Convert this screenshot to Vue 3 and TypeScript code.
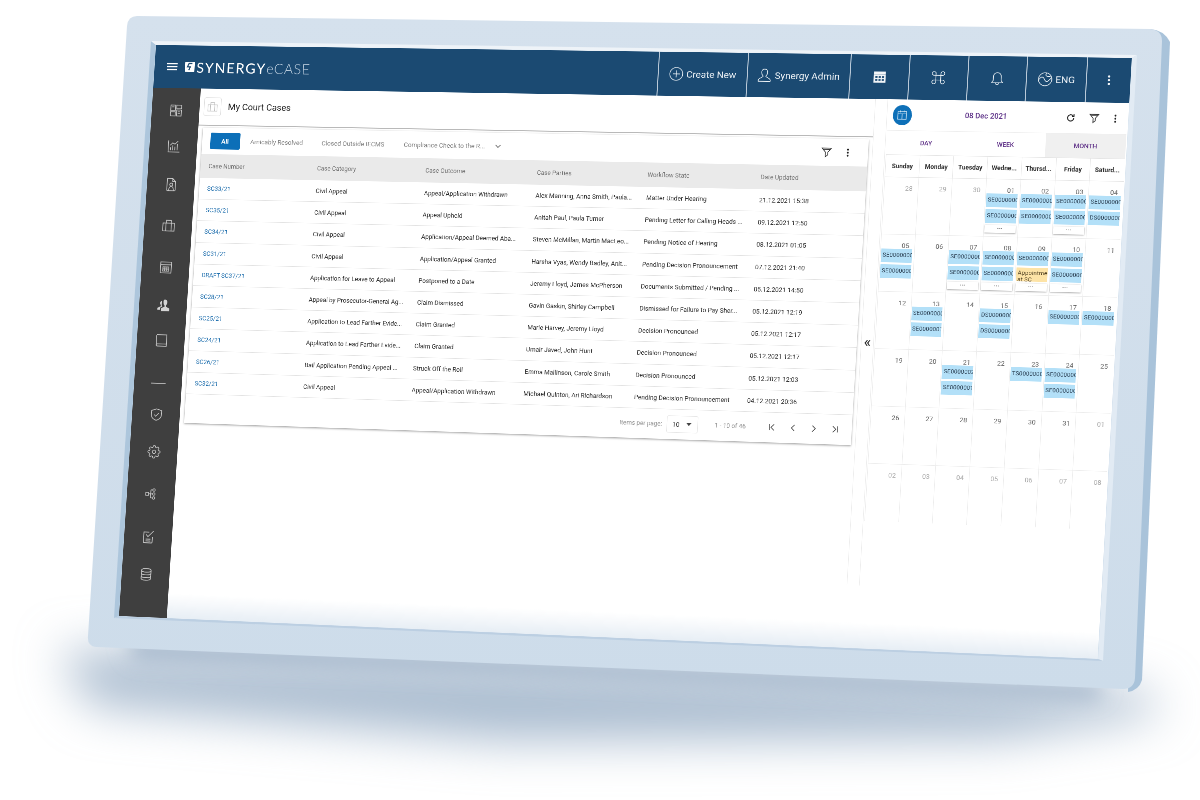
<script setup lang="ts">
type Pt = [number, number]
const W = 1952
const H = 1170
function homography(p0: Pt, p1: Pt, p2: Pt, p3: Pt): string {
  const dx1 = p1[0] - p2[0], dx2 = p3[0] - p2[0], sx = p0[0] - p1[0] + p2[0] - p3[0]
  const dy1 = p1[1] - p2[1], dy2 = p3[1] - p2[1], sy = p0[1] - p1[1] + p2[1] - p3[1]
  const den = dx1 * dy2 - dx2 * dy1
  const g = (sx * dy2 - dx2 * sy) / den
  const h = (dx1 * sy - sx * dy1) / den
  const a = p1[0] - p0[0] + g * p1[0], b = p3[0] - p0[0] + h * p3[0]
  const d = p1[1] - p0[1] + g * p1[1], e = p3[1] - p0[1] + h * p3[1]
  return `matrix3d(${[a / W, d / W, 0, g / W, b / H, e / H, 0, h / H, 0, 0, 1, 0, p0[0], p0[1], 0, 1].join(',')})`
}
const screenTransform = homography([156, 45], [1132, 58], [1098, 659], [119, 616])

const gear = 'M19.4 15a1.65 1.65 0 0 0 .33 1.82l.06.06a2 2 0 0 1 0 2.83 2 2 0 0 1-2.83 0l-.06-.06a1.65 1.65 0 0 0-1.82-.33 1.65 1.65 0 0 0-1 1.51V21a2 2 0 0 1-2 2 2 2 0 0 1-2-2v-.09A1.65 1.65 0 0 0 9 19.4a1.65 1.65 0 0 0-1.82.33l-.06.06a2 2 0 0 1-2.83 0 2 2 0 0 1 0-2.83l.06-.06a1.65 1.65 0 0 0 .33-1.82 1.65 1.65 0 0 0-1.51-1H3a2 2 0 0 1-2-2 2 2 0 0 1 2-2h.09A1.65 1.65 0 0 0 4.6 9a1.65 1.65 0 0 0-.33-1.82l-.06-.06a2 2 0 0 1 0-2.83 2 2 0 0 1 2.83 0l.06.06a1.65 1.65 0 0 0 1.82.33H9a1.65 1.65 0 0 0 1-1.51V3a2 2 0 0 1 2-2 2 2 0 0 1 2 2v.09a1.65 1.65 0 0 0 1 1.51 1.65 1.65 0 0 0 1.82-.33l.06-.06a2 2 0 0 1 2.83 0 2 2 0 0 1 0 2.83l-.06.06a1.65 1.65 0 0 0-.33 1.82V9a1.65 1.65 0 0 0 1.51 1H21a2 2 0 0 1 2 2 2 2 0 0 1-2 2h-.09a1.65 1.65 0 0 0-1.51 1z M12 9a3 3 0 1 0 .01 0z'
const sideIcons: { d: string; y: number; fill?: boolean; small?: boolean }[] = [
  { y: 134, d: 'M3 3h8v9H3z M13 3h8v6h-8z M13 11h8v10h-8z M3 14h8v7H3z M5 6h4 M15 14h4 M15 17h4' },
  { y: 208, d: 'M3 2v19h19 M7 18v-5 M10.5 18v-8 M14 18v-6 M18 18V8 M6 10l4-4 4 2 5-5' },
  { y: 286, d: 'M5 2h9l5 5v14a1 1 0 0 1-1 1H6a1 1 0 0 1-1-1z M14 2v5h5 M12 9.5a2.5 2.5 0 1 0 .01 0z M8 22c0-4 1.500-7 4-7s4 3 4 7' },
  { y: 370, d: 'M2.500 8h19v13h-19z M8 8V3.500h8V8 M7.500 8v13 M16.500 8v13' },
  { y: 456, d: 'M3 3h18v18H3z M3 7.500h18 M7 11h10v7H7z M10.300 11v7 M13.700 11v7 M7 14.500h10' },
  { y: 534, fill: true, d: 'M14 2c3 0 4.500 2.500 4 5.500-.3 2-1 3.500-2 4.500v1.500l6 3V21H8v-4.500l6-3V12c-1-1-2-2.500-2.200-4.500C11.500 4.500 11.500 2 14 2z M9.500 4.500C7 4.500 6 6.500 6.500 9c.2 1.200.6 2.200 1.300 3v1L2 16v3h4.500v-3.500l3.500-2c-1.300-2-1.500-5-.5-9z' },
  { y: 605, d: 'M5 3h16v15H6a2 2 0 0 0-2 2V5a2 2 0 0 1 1-2z M4 20a2 2 0 0 0 2 1.500h15V18' },
  { y: 693, d: 'M0 12h24' },
  { y: 757, small: true, d: 'M12 2l9 3v7c0 5-4 8.500-9 10-5-1.500-9-5-9-10V5z M8 12l3 3 5-5.500' },
  { y: 833, small: true, d: gear },
  { y: 919, small: true, d: 'M2 9.500h5v5H2z M7 12h4 M11 5v14 M11 5h3 M11 12h3 M11 19h3 M16.500 2.800a2.200 2.200 0 1 0 .01 0z M16.500 9.800a2.200 2.200 0 1 0 .01 0z M16.500 16.800a2.200 2.200 0 1 0 .01 0z' },
  { y: 1007, d: 'M13 4H4v16a1.500 1.500 0 0 0 1.500 1.500H17a1.500 1.500 0 0 0 1.500-1.500v-8 M8 8l3 3.500L20 2 M7.500 15.500h8 M7.500 18.500h8' },
  { y: 1083, d: 'M4 5.500C4 1.500 20 1.500 20 5.500v13c0 4-16 4-16 0z M4 5.500c0 4 16 4 16 0 M4 10c0 4 16 4 16 0 M4 14.500c0 4 16 4 16 0' }
]
const iconStep = sideIcons.map((ic, i) => (i === 0 ? ic.y - 88 - 18 : ic.y - sideIcons[i - 1].y - 36))

const columns = ['Case Number', 'Case Category', 'Case Outcome', 'Case Parties', 'Workflow State', 'Date Updated']
const rows = [
  ['SC33/21', 'Civil Appeal', 'Appeal/Application Withdrawn', 'Alex Manning, Anna Smith, Paula...', 'Matter Under Hearing', '21.12.2021 15:38'],
  ['SC35/21', 'Civil Appeal', 'Appeal Upheld', 'Anitah Paul, Paula Turner', 'Pending Letter for Calling Heads ...', '09.12.2021 12:50'],
  ['SC34/21', 'Civil Appeal', 'Application/Appeal Deemed Aba...', 'Steven McMillan, Martin MacLeo...', 'Pending Notice of Hearing', '08.12.2021 01:05'],
  ['SC31/21', 'Civil Appeal', 'Application/Appeal Granted', 'Harsha Vyas, Wendy Badley, Anit...', 'Pending Decision Pronouncement', '07.12.2021 21:40'],
  ['DRAFT-SC37/21', 'Application for Leave to Appeal', 'Postponed to a Date', 'Jeremy Lloyd, James McPherson', 'Documents Submitted / Pending ...', '05.12.2021 14:50'],
  ['SC28/21', 'Appeal by Prosecutor-General Ag...', 'Claim Dismissed', 'Gavin Gaskin, Shirley Campbell', 'Dismissed for Failure to Pay Sher...', '05.12.2021 12:19'],
  ['SC25/21', 'Application to Lead Farther Evide...', 'Claim Granted', 'Marie Harvey, Jeremy Lloyd', 'Decision Pronounced', '05.12.2021 12:17'],
  ['SC24/21', 'Application to Lead Farther Evide...', 'Claim Granted', 'Umair Javed, John Hunt', 'Decision Pronounced', '05.12.2021 12:17'],
  ['SC26/21', 'Bail Application Pending Appeal ...', 'Struck Off the Roll', 'Emma Mallinson, Carole Smith', 'Decision Pronounced', '05.12.2021 12:03'],
  ['SC32/21', 'Civil Appeal', 'Appeal/Application Withdrawn', 'Michael Quinton, Ari Richardson', 'Pending Decision Pronouncement', '04.12.2021 20:36']
]

const weekdays = ['Sunday', 'Monday', 'Tuesday', 'Wedne...', 'Thursd...', 'Friday', 'Saturd...']
interface Cell { n: string; muted?: boolean; ev?: string[]; more?: boolean }
const S = 'SE0000000'
const D = 'DS0000000'
const cells: Cell[] = [
  { n: '28', muted: true }, { n: '29', muted: true }, { n: '30', muted: true },
  { n: '01', ev: [S, S], more: true }, { n: '02', ev: [S, S] }, { n: '03', ev: [S, S], more: true }, { n: '04', ev: [S, D] },
  { n: '05', ev: [S, S] }, { n: '06' }, { n: '07', ev: [S, S], more: true }, { n: '08', ev: [S, S], more: true },
  { n: '09', ev: [S, 'Appointment at SC'], more: true }, { n: '10', ev: [S, S], more: true }, { n: '11' },
  { n: '12' }, { n: '13', ev: [S, 'SE0000001'] }, { n: '14' }, { n: '15', ev: [D, D] }, { n: '16' }, { n: '17', ev: [S] }, { n: '18', ev: [S] },
  { n: '19' }, { n: '20' }, { n: '21', ev: ['SE0000002', 'SE0000001'] }, { n: '22' }, { n: '23', ev: ['TS0000000'] }, { n: '24', ev: [S, S] }, { n: '25' },
  { n: '26' }, { n: '27' }, { n: '28' }, { n: '29' }, { n: '30' }, { n: '31' }, { n: '01', muted: true },
  { n: '02', muted: true }, { n: '03', muted: true }, { n: '04', muted: true }, { n: '05', muted: true }, { n: '06', muted: true }, { n: '07', muted: true }, { n: '08', muted: true }
]
</script>

<template>
  <div class="stage">
    <svg class="device" width="1200" height="800" viewBox="0 0 1200 800">
      <defs>
        <filter id="floor" x="-20%" y="-100%" width="140%" height="300%">
          <feGaussianBlur stdDeviation="24" />
        </filter>
        <filter id="floor2" x="-10%" y="-100%" width="120%" height="300%">
          <feGaussianBlur stdDeviation="10" />
        </filter>
        <linearGradient id="front" x1="0" y1="0" x2="0" y2="1">
          <stop offset="0" stop-color="#d5e1ed" />
          <stop offset="1" stop-color="#cddcea" />
        </linearGradient>
      </defs>
      <path d="M60 650 L1140 690 L1165 712 L1000 738 L500 740 L90 705 Z" fill="#a9bbcf" filter="url(#floor)" />
      <path d="M125 640 L1105 685 L1095 698 L135 658 Z" fill="#9db1c7" filter="url(#floor2)" />
      <path d="M1150 29 Q1164 30 1170 42 L1142 680 Q1139 690 1128 692 Z" fill="#a9c3da" />
      <path d="M137 16 L1150 29 Q1162 30 1162 41 L1135 678 Q1134 689 1123 689 L96 647 Q87 646 88 636 L127 26 Q128 16 137 16 Z" fill="url(#front)" />
      <path d="M151 41 L156 45 L119 616 L114 618 Z" fill="#adc6dc" />
      <path d="M151 41 L1137 55 L1132 58 L156 45 Z" fill="#eef3f8" />
      <path d="M1132 58 L1137 55 L1103 661 L1098 659 Z" fill="#e2ebf4" />
      <path d="M114 618 L119 616 L1098 659 L1103 661 Z" fill="#bccfe2" />
    </svg>

    <div class="screen" :style="{ transform: screenTransform }">
      <header class="topbar">
        <div class="brand">
          <svg class="burger" viewBox="0 0 22 16"><path d="M0 2h22M0 8h22M0 14h22" /></svg>
          <svg class="mark" viewBox="0 0 20 20"><path d="M0 0h20v20H0z" fill="#fff" /><path d="M15 3H8L5 10h6l-3 7" fill="none" stroke="#1c4a72" stroke-width="2.400" /></svg>
          <span class="syn">SYNERGY</span><span class="ecase">eCASE</span>
        </div>
        <div class="tb w177">
          <svg class="tb-i" viewBox="0 0 24 24"><circle cx="12" cy="12" r="11" /><path d="M12 6v12M6 12h12" /></svg>
          <span>Create New</span>
        </div>
        <div class="tb w202">
          <svg class="tb-i" viewBox="0 0 24 24"><path d="M12 1.500c3.500 0 5.500 2.800 5 6.500-.3 2.200-1.200 4-2.500 5.200v1.300l6 3.500c1.500 1 2 2.500 1.500 4.500H2c-.5-2 0-3.500 1.500-4.500l6-3.500v-1.300C8.200 12 7.300 10.200 7 8c-.5-3.700 1.500-6.500 5-6.500z" /></svg>
          <span>Synergy Admin</span>
        </div>
        <div class="tb w115">
          <svg class="tb-i solid" viewBox="0 0 24 24"><path d="M2 3h20v19H2z" /><path class="cut" d="M2 7.500h20M5 11h3v2.500H5zM10.500 11h3v2.500h-3zM16 11h3v2.500h-3zM5 16h3v2.500H5zM10.500 16h3v2.500h-3zM16 16h3v2.500h-3z" /></svg>
        </div>
        <div class="tb w114">
          <svg class="tb-i" viewBox="0 0 24 24"><path d="M8 8H5a3.200 3.200 0 1 1 3-3zM16 8V5a3.200 3.200 0 1 1 3 3zM8 16v3a3.200 3.200 0 1 1-3-3zM16 16h3a3.200 3.200 0 1 1-3 3zM8 8h8v8H8z" /></svg>
        </div>
        <div class="tb w113">
          <svg class="tb-i" viewBox="0 0 24 24"><path d="M12 2c-4 0-6.500 3-6.500 7v6L3 19h18l-2.500-4V9c0-4-2.500-7-6.500-7z M9.500 19c0 2 1 3 2.500 3s2.500-1 2.500-3" /></svg>
        </div>
        <div class="tb w115">
          <svg class="tb-i" viewBox="0 0 24 24"><circle cx="12" cy="12" r="11" /><path d="M1.500 13c3-5 6-6 8-3s3 6 5 6 4-2 8-7M14 1.500c-2 3-1 5 1 5.500s4 0 6 1" /></svg>
          <span>ENG</span>
        </div>
        <div class="tb w85">
          <svg class="dots-lg" viewBox="0 0 6 24"><circle cx="3" cy="4" r="2.500" /><circle cx="3" cy="12" r="2.500" /><circle cx="3" cy="20" r="2.500" /></svg>
        </div>
      </header>

      <div class="body">
        <nav class="sidebar">
          <svg
            v-for="(ic, i) in sideIcons"
            :key="i"
            class="side-i"
            :class="{ filled: ic.fill, small: ic.small }"
            :style="{ marginTop: iconStep[i] + 'px' }"
            viewBox="0 0 24 24"
          ><path :d="ic.d" /></svg>
        </nav>

        <main class="cases">
          <div class="page-head">
            <div class="page-icon">
              <svg viewBox="0 0 24 24"><path d="M2.500 8h19v13h-19z M8 8V3.500h8V8 M7.500 8v13 M16.500 8v13" /></svg>
            </div>
            <h1>My Court Cases</h1>
          </div>

          <section class="card">
            <div class="tabs">
              <span class="tab-all">All</span>
              <span class="tab t1">Amicably Resolved</span>
              <span class="tab t2">Closed Outside IECMS</span>
              <span class="tab t3">Compliance Check to the R...</span>
              <svg class="chev" viewBox="0 0 12 8"><path d="M1 1.500l5 5 5-5" /></svg>
              <svg class="filter-i" viewBox="0 0 24 24"><path d="M2 3h20l-7.500 9v6l-5 4V12z M5 6h14" /></svg>
              <svg class="dots" viewBox="0 0 6 24"><circle cx="3" cy="4" r="2.500" /><circle cx="3" cy="12" r="2.500" /><circle cx="3" cy="20" r="2.500" /></svg>
            </div>

            <div class="grid head">
              <span v-for="c in columns" :key="c">{{ c }}</span>
            </div>
            <div v-for="r in rows" :key="r[0]" class="grid row">
              <a>{{ r[0] }}</a>
              <span v-for="(c, i) in r.slice(1)" :key="i">{{ c }}</span>
            </div>

            <div class="pager">
              <span class="per">Items per page:</span>
              <div class="select">
                <span>10</span>
                <svg viewBox="0 0 10 6"><path d="M0 0h10L5 6z" /></svg>
              </div>
              <span class="count">1 - 10 of 46</span>
              <svg class="pg" viewBox="0 0 16 16"><path d="M3 2v12M12 2L6 8l6 6" /></svg>
              <svg class="pg" viewBox="0 0 16 16"><path d="M11 2L5 8l6 6" /></svg>
              <svg class="pg" viewBox="0 0 16 16"><path d="M5 2l6 6-6 6" /></svg>
              <svg class="pg" viewBox="0 0 16 16"><path d="M4 2l6 6-6 6M13 2v12" /></svg>
            </div>
          </section>
        </main>

        <div class="collapse">«</div>

        <aside class="calendar">
          <div class="cal-head">
            <span class="cal-badge">
              <svg viewBox="0 0 24 24"><path d="M3 4h18v17H3z M3 9h18 M8 2v4 M16 2v4 M12 9v12" /></svg>
            </span>
            <span class="cal-date">08 Dec 2021</span>
            <svg class="refresh" viewBox="0 0 24 24"><path d="M20 12a8 8 0 1 1-2.500-5.800 M20 2.500v5.500h-5.500" /></svg>
            <svg class="filter-i f2" viewBox="0 0 24 24"><path d="M2 3h20l-7.500 9v6l-5 4V12z M5 6h14" /></svg>
            <svg class="dots d2" viewBox="0 0 6 24"><circle cx="3" cy="4" r="2.500" /><circle cx="3" cy="12" r="2.500" /><circle cx="3" cy="20" r="2.500" /></svg>
          </div>
          <div class="cal-tabs">
            <span>DAY</span>
            <span>WEEK</span>
            <span class="active">MONTH</span>
          </div>
          <div class="week">
            <span v-for="d in weekdays" :key="d">{{ d }}</span>
          </div>
          <div class="month">
            <div v-for="(c, i) in cells" :key="i" class="day" :class="{ muted: c.muted }">
              <div class="num">{{ c.n }}</div>
              <div
                v-for="(e, j) in c.ev"
                :key="j"
                class="event"
                :class="{ appt: e.startsWith('App') }"
              >{{ e }}</div>
              <div v-if="c.more" class="more">•••</div>
            </div>
          </div>
        </aside>
      </div>
      <div class="glare"></div>
    </div>
  </div>
</template>

<style>
html, body { margin: 0; background: #fff; }
</style>

<style scoped>
.stage {
  position: relative;
  width: 1200px;
  height: 800px;
  overflow: hidden;
  background: #fff;
  font-family: Roboto, "Liberation Sans", sans-serif;
}
.device { position: absolute; left: 0; top: 0; }
.screen {
  position: absolute;
  left: 0;
  top: 0;
  width: 1952px;
  height: 1170px;
  transform-origin: 0 0;
  background: #fff;
  overflow: hidden;
  filter: blur(.4px);
}
.screen svg { fill: none; stroke: currentColor; display: block; }

/* top bar */
.topbar {
  height: 88px;
  background: #1b4a72;
  display: flex;
  color: #eef3f7;
  font-size: 19.200px;
}
.brand { flex: 1; display: flex; align-items: center; padding-left: 26px; color: #fff; }
.screen .burger { width: 22px; height: 16px; stroke-width: 2.400; margin-right: 16px; }
.screen .mark { width: 20px; height: 20px; margin-right: 4px; stroke: none; }
.syn { font-family: Lato, sans-serif; font-size: 29px; letter-spacing: 2.400px; font-weight: 400; }
.ecase { font-family: Lato, sans-serif; font-size: 29px; font-weight: 300; color: #b9cbdc; letter-spacing: 1px; }
.tb {
  display: flex;
  align-items: center;
  justify-content: center;
  gap: 6px;
  border-left: 2px solid #b9c9d8;
  box-sizing: border-box;
  flex: none;
}
.w177 { width: 177px; }
.w202 { width: 202px; }
.w115 { width: 115px; }
.w114 { width: 114px; }
.w113 { width: 113px; }
.w85 { width: 85px; }
.screen .tb-i { width: 28px; height: 28px; stroke-width: 1.200; }
.screen .tb-i.solid { fill: #f2f5f8; stroke: none; }
.screen .tb-i.solid .cut { fill: #1b4a72; stroke: #1b4a72; stroke-width: .6; }
.screen .dots-lg { width: 6px; height: 22px; fill: #f2f5f8; stroke: none; }

/* body */
.body { display: flex; height: 1082px; }
.sidebar {
  width: 100px;
  flex: none;
  background: #3f3f3f;
  display: flex;
  flex-direction: column;
  align-items: center;
  color: #c9c9c9;
  padding-left: 2px;
  box-sizing: border-box;
}
.screen .side-i { width: 36px; height: 36px; padding: 3px; box-sizing: border-box; stroke-width: 1.300; flex: none; }
.screen .side-i.small { padding: 4px; }
.screen .side-i.filled { fill: #d5d5d5; stroke: none; }

/* cases */
.cases { width: 1363px; flex: none; box-sizing: border-box; }
.page-head {
  height: 76px;
  box-sizing: border-box;
  border-bottom: 2px solid #b9b9b9;
  display: flex;
  align-items: center;
  padding-left: 9px;
  gap: 14px;
}
.page-icon {
  width: 36px;
  height: 38px;
  border: 1.500px solid #dcdcdc;
  border-radius: 4px;
  display: flex;
  align-items: center;
  justify-content: center;
  color: #bbb;
  box-sizing: border-box;
}
.screen .page-icon svg { width: 24px; height: 24px; stroke-width: 1.200; }
.page-head h1 { margin: 0; font-size: 18.500px; font-weight: 400; color: #222; }
.card {
  margin: 4px 8px 0 10px;
  background: #fff;
  box-shadow: 0 2px 4px rgba(0, 0, 0, .32), 0 0 3px rgba(0, 0, 0, .1);
}
.tabs {
  height: 54px;
  display: flex;
  align-items: center;
  padding-left: 16.500px;
  font-size: 13px;
  color: #808080;
}
.tab-all {
  width: 62px;
  height: 34px;
  border-radius: 3px;
  background: #0c6fb8;
  color: #fff;
  font-weight: 700;
  font-size: 13px;
  display: flex;
  align-items: center;
  justify-content: center;
  margin-right: 21.500px;
}
.tab { white-space: nowrap; }
.t1 { width: 148px; }
.t2 { width: 169px; }
.t3 { width: 186px; }
.screen .chev { width: 12px; height: 8px; stroke-width: 1.600; color: #666; }
.screen .filter-i { width: 22px; height: 22px; stroke-width: 1.700; color: #333; margin-left: auto; }
.screen .dots { width: 5px; height: 18px; fill: #222; stroke: none; margin: 0 37.500px 0 27.500px; }
.grid {
  display: grid;
  grid-template-columns: 225.500px 222.500px 226.500px 222px 224px 1fr;
  padding-left: 16.500px;
  align-items: center;
  white-space: nowrap;
}
.head { height: 49px; background: #eaeaea; color: #707070; font-size: 12.400px; }
.row {
  height: 44.200px;
  box-sizing: border-box;
  border-bottom: 1.500px solid #e2e2e2;
  font-size: 12.600px;
  color: #2a2a2a;
}
.row a { color: #1f6fae; }
.pager {
  height: 59px;
  display: flex;
  align-items: center;
  font-size: 12.300px;
  color: #8a8a8a;
  padding-left: 887px;
  box-sizing: border-box;
}
.per { width: 94px; white-space: nowrap; }
.select {
  width: 62px;
  height: 34px;
  border: 1.500px solid #e6e6e6;
  border-radius: 3px;
  box-sizing: border-box;
  display: flex;
  align-items: center;
  justify-content: space-between;
  padding: 0 12px 0 10px;
  color: #444;
  font-size: 13px;
}
.screen .select svg { width: 10px; height: 6px; fill: #444; stroke: none; }
.count { width: 105px; margin-left: 33px; color: #888; white-space: nowrap; }
.screen .pg { width: 16px; height: 16px; stroke-width: 1.500; color: #444; margin-right: 25px; flex: none; }

/* collapse */
.collapse {
  width: 25px;
  height: 959px;
  flex: none;
  border-left: 1.500px solid #ececec;
  border-right: 1.500px solid #ececec;
  box-sizing: border-box;
  display: flex;
  align-items: center;
  justify-content: center;
  color: #222;
  font-size: 30px;
  line-height: 1;
}

/* calendar */
.calendar { flex: 1; padding: 0 2px; min-width: 0; box-sizing: border-box; }
.cal-head {
  height: 61px;
  display: flex;
  align-items: center;
  padding-left: 9px;
  box-sizing: border-box;
}
.cal-badge {
  width: 40px;
  height: 40px;
  border-radius: 50%;
  background: #0e70b8;
  display: flex;
  align-items: center;
  justify-content: center;
  color: #cfe3f3;
}
.screen .cal-badge svg { width: 22px; height: 22px; stroke-width: 1.300; }
.cal-date { margin-left: 103px; width: 212px; font-size: 14.500px; font-weight: 500; color: #5b2f86; }
.screen .refresh { width: 20px; height: 20px; stroke-width: 2.600; color: #222; }
.screen .f2 { margin-left: 26px; }
.screen .d2 { margin: 0 20px 0 28px; }
.cal-tabs {
  height: 48px;
  display: grid;
  grid-template-columns: repeat(3, 1fr);
  border-top: 1.500px solid #eee;
  box-sizing: border-box;
  color: #613489;
  font-size: 12.500px;
  font-weight: 500;
  text-align: center;
}
.cal-tabs span { display: flex; align-items: center; justify-content: center; }
.cal-tabs .active { background: #f0f0f0; }
.week {
  height: 45px;
  display: grid;
  grid-template-columns: repeat(7, minmax(0, 1fr));
  border-top: 1.500px solid #e4e4e4;
  border-bottom: 1.500px solid #e4e4e4;
  box-sizing: border-box;
  font-size: 12.300px;
  font-weight: 700;
  color: #2e2e2e;
}
.week span {
  display: flex;
  align-items: center;
  justify-content: center;
  border-left: 1.500px solid #e8e8e8;
  white-space: nowrap;
}
.month { display: grid; grid-template-columns: repeat(7, minmax(0, 1fr)); grid-auto-rows: 113px; }
.day {
  border-left: 1.500px solid #ececec;
  border-bottom: 1.500px solid #ececec;
  box-sizing: border-box;
  padding: 14px 4px 0 1px;
  min-width: 0;
  overflow: hidden;
}
.day:nth-last-child(-n + 7) { border-bottom: 0; }
.num {
  height: 14px;
  line-height: 16px;
  text-align: right;
  padding-right: 6px;
  font-size: 13px;
  color: #666;
}
.muted .num { color: #a8a8a8; }
.event {
  height: 27px;
  line-height: 25px;
  background: #b3e0f8;
  color: #26394c;
  font-size: 11.300px;
  padding: 0 0 0 3px;
  margin-bottom: 4px;
  overflow: hidden;
  white-space: nowrap;
  letter-spacing: .2px;
}
.event.appt {
  background: #fde3a6;
  white-space: normal;
  line-height: 13px;
  padding-top: 4px;
  box-sizing: border-box;
  color: #4e3e20;
}
.more {
  height: 15px;
  line-height: 14px;
  background: #fff;
  box-shadow: 0 1px 3px rgba(0, 0, 0, .4);
  text-align: center;
  font-size: 8px;
  color: #333;
  letter-spacing: 1px;
}
.glare {
  position: absolute;
  left: 100px;
  right: 0;
  bottom: 0;
  height: 50px;
  background: linear-gradient(to bottom, rgba(235, 241, 246, 0), rgba(227, 235, 243, .85));
  pointer-events: none;
}
</style>
